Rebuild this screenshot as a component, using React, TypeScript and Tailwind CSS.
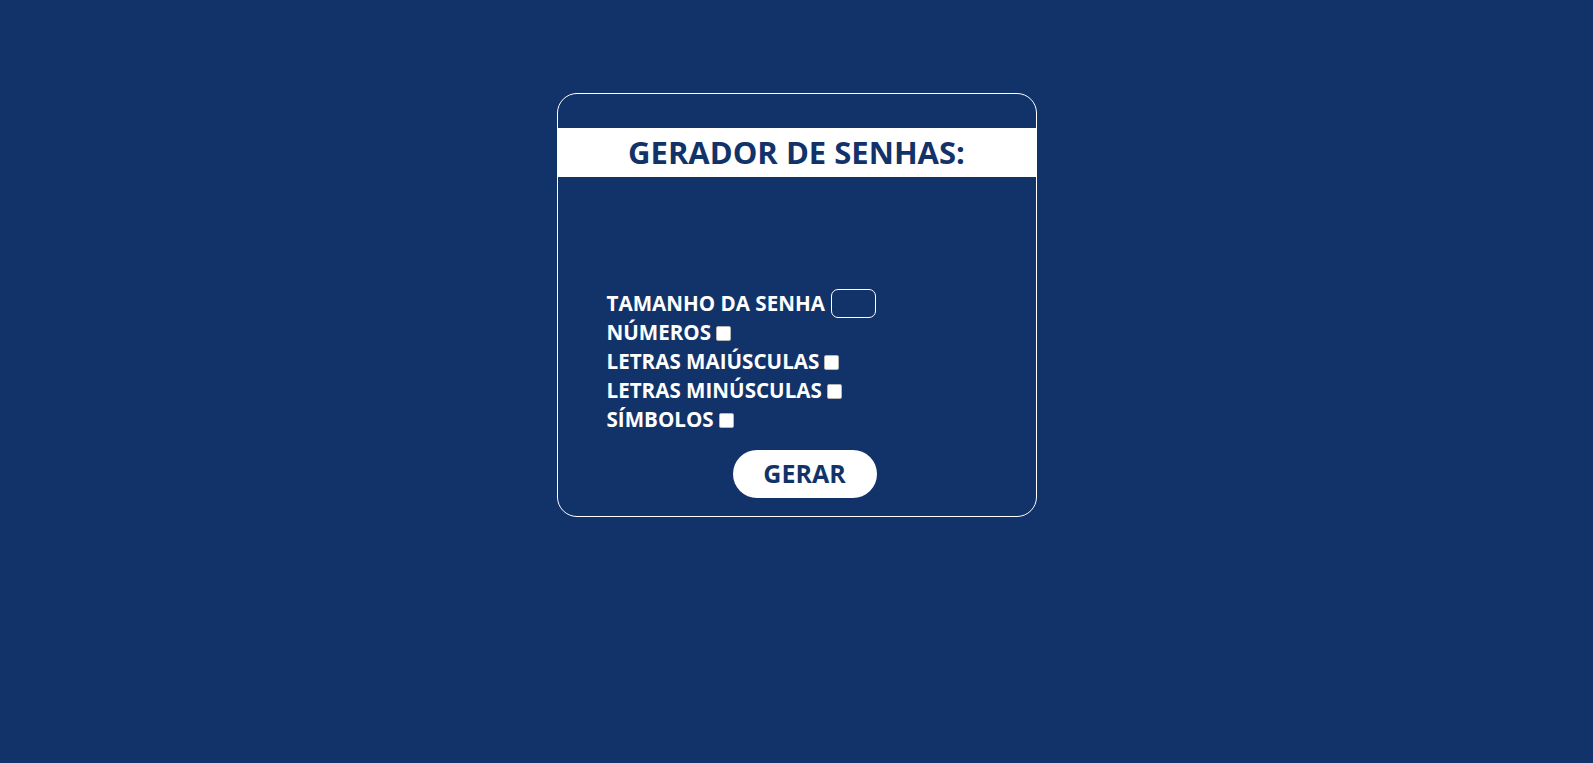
import {useState} from "react";

const options = [
 {id: "numeros", label: "NÚMEROS"},
 {id: "maiusculas", label: "LETRAS MAIÚSCULAS"},
 {id: "minusculas", label: "LETRAS MINÚSCULAS"},
 {id: "simbolos", label: "SÍMBOLOS"},
];

const App = () => {
 const [size, setSize] = useState("");
 const [checked, setChecked] = useState<Record<string, boolean>>({});

 return (
  <div
   className="min-h-screen w-full bg-[#12336a] flex justify-center pt-[93px]"
   style={{fontFamily: '"Open Sans", "Liberation Sans", sans-serif'}}>
   <div className="w-[480px] h-[424px] border border-white rounded-[20px] pt-[34px] flex flex-col">
    {/* Header band */}
    <div className="bg-white h-[49px] flex items-center justify-center">
     <h1 className="text-[31px] font-bold text-[#12336a] leading-none">
      GERADOR DE SENHAS:
     </h1>
    </div>

    {/* Form */}
    <div className="flex-1 flex flex-col justify-end pl-[49px] pr-[35px] pb-[18px]">
     <div className="flex flex-col text-white font-bold text-[20.6px]">
      <label className="flex items-center h-[29px]">
       TAMANHO DA SENHA
       <input
        type="text"
        value={size}
        onChange={(e) => setSize(e.target.value)}
        className="ml-[6px] w-[45px] h-[29px] bg-transparent border border-white rounded-[7px] text-white text-sm px-1 outline-none"
       />
      </label>
      {options.map((opt) => (
       <label key={opt.id} className="flex items-center h-[29px]">
        {opt.label}
        <input
         type="checkbox"
         checked={!!checked[opt.id]}
         onChange={(e) =>
          setChecked({...checked, [opt.id]: e.target.checked})
         }
         className="ml-[5px] mt-[2px] w-[15px] h-[15px] appearance-none bg-white rounded-[2px] border border-[#b5b5b5]"
        />
       </label>
      ))}
     </div>
     <div className="flex justify-center mt-[16px] pl-[2px]">
      <button className="w-[144px] h-[48px] bg-white rounded-full text-[25px] font-bold text-[#12336a]">
       GERAR
      </button>
     </div>
    </div>
   </div>
  </div>
 );
};

export default App;
